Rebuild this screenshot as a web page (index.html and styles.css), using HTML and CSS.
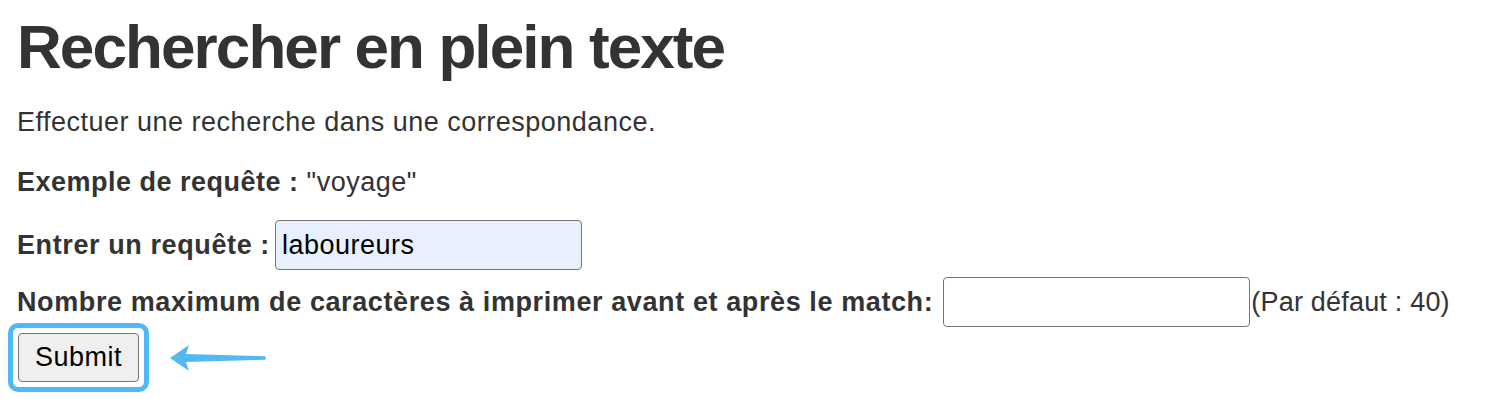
FILE: index.html
```html
<!DOCTYPE html>
<html lang="fr">
<head>
<meta charset="utf-8">
<title>Rechercher en plein texte</title>
<link rel="stylesheet" href="styles.css">
</head>
<body>
<main class="page">
  <h1 class="title">Rechercher en plein texte</h1>
  <p class="intro">Effectuer une recherche dans une correspondance.</p>
  <p class="example"><strong>Exemple de requête :</strong> "voyage"</p>
  <form class="search-form">
    <div class="row">
      <label class="label" for="q">Entrer un requête :</label>
      <input class="field field-filled" id="q" type="text" value="laboureurs">
    </div>
    <div class="row">
      <label class="label label-long" for="n">Nombre maximum de caractères à imprimer avant et après le match:</label>
      <input class="field" id="n" type="text">
      <span class="hint">(Par défaut : 40)</span>
    </div>
    <div class="submit-row">
      <span class="highlight"><button class="btn" type="button">Submit</button></span>
      <svg class="arrow" width="100" height="30" viewBox="0 0 100 30" aria-hidden="true">
        <path d="M1 14 L20 1 L17 10 L96 12.2 Q98 14 96 15.8 L17 18 L20 27 Z" fill="#52b9f4"/>
      </svg>
    </div>
  </form>
</main>
</body>
</html>
```

FILE: styles.css
```css
html, body {
  margin: 0;
  padding: 0;
  background: #ffffff;
}

body {
  font-family: "Liberation Sans", Arial, Helvetica, sans-serif;
  color: #333333;
  font-size: 27px;
  letter-spacing: 0.5px;
}

.page {
  padding: 11px 16px 0 17px;
}

.title {
  margin: 0 0 24px 0;
  font-size: 62px;
  font-weight: bold;
  line-height: 72px;
  letter-spacing: -1.9px;
}

.intro {
  margin: 0;
  line-height: 30px;
}

.example {
  margin: 30px 0 0 0;
  line-height: 30px;
}

.search-form {
  margin-top: 23px;
  display: flex;
  flex-direction: column;
  gap: 7px;
}

.row {
  display: flex;
  align-items: center;
}

.label {
  font-weight: bold;
  letter-spacing: 0.6px;
  margin-right: 5px;
}

.label-long {
  margin-right: 10px;
}

.field {
  box-sizing: border-box;
  width: 307px;
  height: 50px;
  border: 1.5px solid #767676;
  border-radius: 4px;
  padding: 0 6px;
  font-family: "Liberation Sans", Arial, Helvetica, sans-serif;
  font-size: 27px;
  letter-spacing: 0.5px;
  color: #000000;
  background: #ffffff;
  outline: none;
}

.field-filled {
  background: #e8f0fe;
}

.hint {
  margin-left: 1px;
  letter-spacing: 0.2px;
}

.submit-row {
  display: flex;
  align-items: center;
  margin-left: -9px;
  margin-top: -11px;
}

.highlight {
  display: inline-flex;
  padding: 5px;
  border: 5px solid #4fb9f5;
  border-radius: 10px;
}

.btn {
  box-sizing: border-box;
  width: 121px;
  height: 49px;
  border: 1.5px solid #767676;
  border-radius: 4px;
  background: #efefef;
  font-family: "Liberation Sans", Arial, Helvetica, sans-serif;
  font-size: 27px;
  letter-spacing: 0.5px;
  color: #000000;
  padding: 0;
}

.arrow {
  margin-left: 20px;
  margin-top: 2px;
}
```
